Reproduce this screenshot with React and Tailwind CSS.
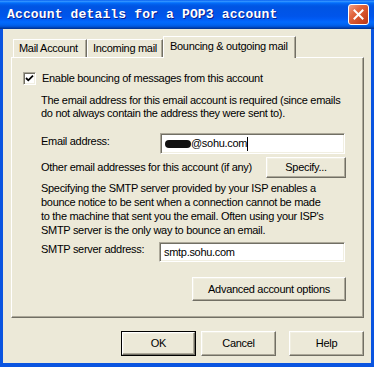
import React from 'react';

// Windows XP style "Account details" dialog

const raised =
  'border border-t-white border-l-white border-r-[#716F64] border-b-[#716F64] shadow-[inset_-1px_-1px_0_#ACA899,inset_1px_1px_0_#F1EFE2]';
const sunken =
  'border border-t-[#ACA899] border-l-[#ACA899] border-r-white border-b-white shadow-[inset_1px_1px_0_#716F64,inset_-1px_-1px_0_#F1EFE2] bg-white';

const Button = ({ children, className = '', isDefault = false }) => (
  <div className={`${isDefault ? 'border border-black' : ''} ${className} flex`}>
    <div className={`${raised} flex-1 flex items-center justify-center bg-[#ECE9D8]`}>{children}</div>
  </div>
);

const Tab = ({ label, selected, className = '' }) => (
  <div
    className={`${className} flex items-center border-l border-t border-l-white border-t-white border-r border-r-[#716F64] shadow-[inset_-1px_0_0_#ACA899] bg-[#ECE9D8] ${
      selected ? 'h-[22px] relative z-10 -mb-px pb-[3px] pl-[6px]' : 'h-[18px] pl-[5px]'
    }`}
  >
    {label}
  </div>
);

export default function App() {
  return (
    <div className="w-[374px] h-[367px] flex flex-col bg-[#0A54E0] font-['Liberation_Sans',Arial,sans-serif] text-[11px] tracking-[-0.3px] text-black">
      {/* title bar */}
      <div className="h-[29px] flex items-center justify-between pl-[7px] pr-[5px] bg-[linear-gradient(180deg,#0058EE_0%,#3593FF_4%,#288EFF_6%,#127DFF_8%,#036FFC_10%,#0262EE_14%,#0057E5_20%,#0054E3_24%,#0055EB_56%,#005BF5_66%,#026AFE_76%,#0062EF_86%,#0052D6_92%,#0040AB_96%,#003092_100%)]">
        <span className="font-['Liberation_Mono',monospace] font-bold text-[13px] tracking-[0.15px] text-white [text-shadow:1px_1px_0_#0A1E8C] pt-px">
          Account details for a POP3 account
        </span>
        <div className="w-[21px] h-[21px] rounded-[3px] border border-white bg-[linear-gradient(135deg,#F0A088_0%,#E2663F_35%,#CF4A24_70%,#B8371A_100%)] flex items-center justify-center">
          <svg width="11" height="11" viewBox="0 0 11 11">
            <path d="M1.5 1.5 L9.5 9.5 M9.5 1.5 L1.5 9.5" stroke="white" strokeWidth="2" strokeLinecap="square" />
          </svg>
        </div>
      </div>

      {/* body */}
      <div className="flex-1 mx-[3px] mb-[4px] bg-[#ECE9D8] pl-[8px] pr-[7px] pt-[7px] flex flex-col">
        {/* tabs */}
        <div className="h-[21px] flex items-end pl-[2px]">
          <Tab label="Mail Account" className="w-[74px]" />
          <Tab label="Incoming mail" className="w-[76px]" />
          <Tab label="Bouncing & outgoing mail" selected className="w-[133px]" />
        </div>

        {/* panel */}
        <div className="h-[261px] border border-t-white border-l-white border-r-[#716F64] border-b-[#716F64] shadow-[inset_-1px_-1px_0_#ACA899] flex flex-col pl-[11px] pr-[17px]">
          <div className="mt-[14px] flex items-center gap-[6px]">
            <div className={`${sunken} w-[13px] h-[13px] flex items-center justify-center`}>
              <svg width="9" height="9" viewBox="0 0 9 9">
                <path d="M1 4 L3.3 6.3 L8 1.6" stroke="black" strokeWidth="1.8" fill="none" />
              </svg>
            </div>
            <span className="leading-[13px]">Enable bouncing of messages from this account</span>
          </div>

          <div className="ml-[18px] mt-[9px] leading-[13px] whitespace-nowrap">
            The email address for this email account is required (since emails
            <br />
            do not always contain the address they were sent to).
          </div>

          <div className="ml-[18px] mt-[13px] flex items-start">
            <span className="w-[119px] mt-px leading-[14px]">Email address:</span>
            <div className={`${sunken} w-[185px] h-[21px] flex items-center pl-[4px]`}>
              <span className="inline-block w-[26px] h-[8px] rounded-[4px] bg-[#111] blur-[0.6px]" />
              <span className="leading-[13px]">@sohu.com</span>
              <span className="inline-block w-px h-[14px] bg-black" />
            </div>
          </div>

          <div className="ml-[18px] mt-[3px] flex items-center justify-between">
            <span>Other email addresses for this account (if any)</span>
            <Button className="w-[80px] h-[21px]">Specify...</Button>
          </div>

          <div className="ml-[18px] mt-[3px] leading-[14px] whitespace-nowrap">
            Specifying the SMTP server provided by your ISP enables a
            <br />
            bounce notice to be sent when a connection cannot be made
            <br />
            to the machine that sent you the email. Often using your ISP's
            <br />
            SMTP server is the only way to bounce an email.
          </div>

          <div className="ml-[18px] mt-[5px] flex items-start">
            <span className="w-[118px] leading-[14px]">SMTP server address:</span>
            <div className={`${sunken} w-[186px] h-[20px] flex items-center pl-[4px]`}>smtp.sohu.com</div>
          </div>

          <div className="mt-[15px] flex justify-end">
            <Button className="w-[154px] h-[24px]">Advanced account options</Button>
          </div>
        </div>

        {/* dialog buttons */}
        <div className="mt-[13px] flex justify-end">
          <Button isDefault className="w-[75px] h-[25px]">OK</Button>
          <Button className="w-[75px] h-[25px] ml-[5px]">Cancel</Button>
          <Button className="w-[75px] h-[25px] ml-[13px]">Help</Button>
        </div>
      </div>
    </div>
  );
}
